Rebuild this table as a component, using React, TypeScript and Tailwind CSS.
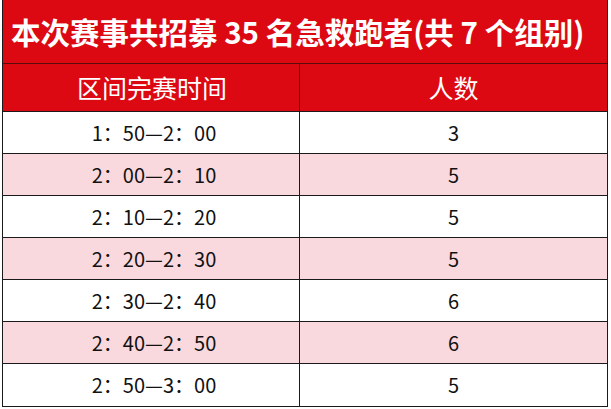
import React from "react";

const rows = [
  ["1：50—2：00", "3"],
  ["2：00—2：10", "5"],
  ["2：10—2：20", "5"],
  ["2：20—2：30", "5"],
  ["2：30—2：40", "6"],
  ["2：40—2：50", "6"],
  ["2：50—3：00", "5"],
];

const font = { fontFamily: '"Noto Sans CJK SC", "Noto Sans", sans-serif' };

export default function App() {
  return (
    <div className="w-[611px] h-[409px] bg-white pl-[2px]" style={font}>
      <div className="w-[606px] border-l border-r border-b border-[#1a1a1a] flex flex-col">
        <div className="h-[64px] bg-[#dc0812] border-b border-[#5a0a0a] flex items-center pl-[8px] text-white text-[29.5px] font-bold whitespace-nowrap">
          本次赛事共招募 35 名急救跑者(共 7 个组别)
        </div>
        <div className="h-[48px] bg-[#dc0812] grid grid-cols-[297px_1fr] border-b border-[#1a1a1a] text-white text-[25px]">
          <div className="flex items-center justify-center border-r border-[#1a1a1a] pl-[2px]">区间完赛时间</div>
          <div className="flex items-center justify-center">人数</div>
        </div>
        {rows.map(([t, n], i) => (
          <div
            key={i}
            className={`h-[42px] grid grid-cols-[297px_1fr] text-[#111] text-[20px] ${i < rows.length - 1 ? "border-b border-[#1a1a1a]" : ""} ${i % 2 === 1 ? "bg-[#f9d9dd]" : "bg-white"}`}
          >
            <div className="flex items-center justify-center border-r border-[#1a1a1a] pl-[6px]">{t}</div>
            <div className="flex items-center justify-center">{n}</div>
          </div>
        ))}
      </div>
    </div>
  );
}
